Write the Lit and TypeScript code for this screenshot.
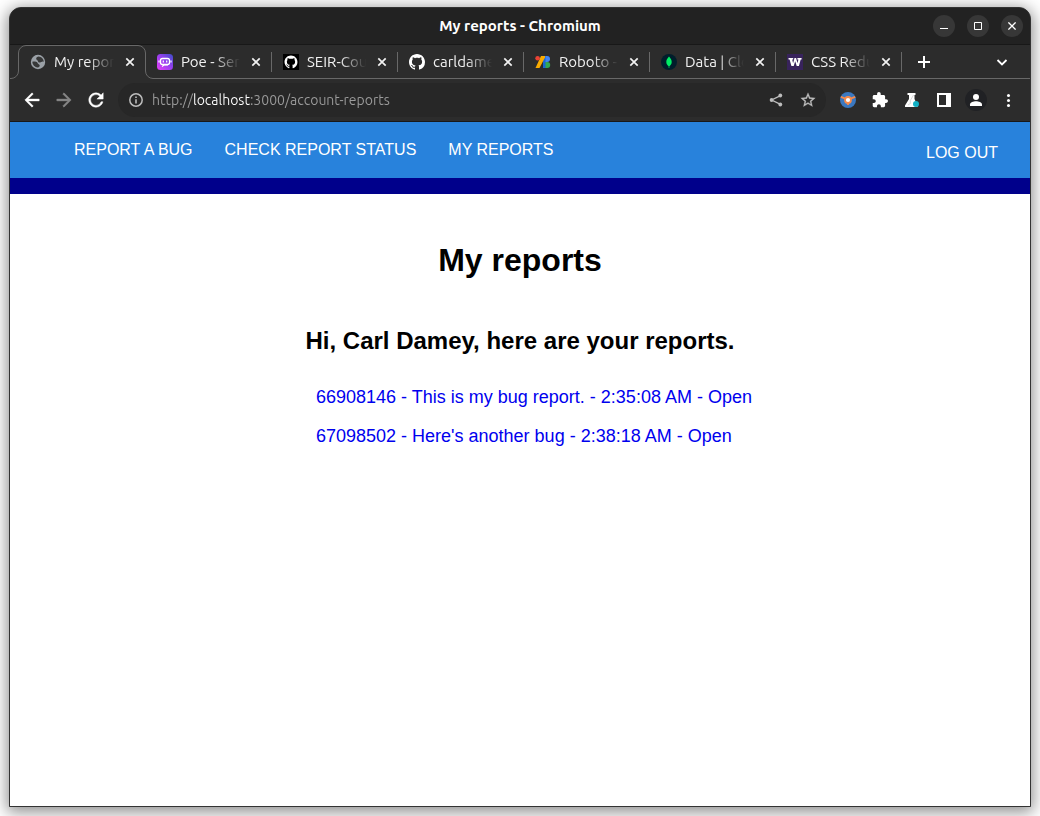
import { LitElement, html, css, svg, nothing, type TemplateResult } from "lit";
import { customElement, property } from "lit/decorators.js";
import { classMap } from "lit/directives/class-map.js";

const GITHUB =
  "M8 0C3.58 0 0 3.58 0 8c0 3.54 2.29 6.53 5.47 7.59.4.07.55-.17.55-.38 0-.19-.01-.82-.01-1.49-2.01.37-2.53-.49-2.69-.94-.09-.23-.48-.94-.82-1.13-.28-.15-.68-.52-.01-.53.63-.01 1.08.58 1.23.82.72 1.21 1.87.87 2.33.66.07-.52.28-.87.51-1.07-1.78-.2-3.64-.89-3.64-3.95 0-.87.31-1.59.82-2.15-.08-.2-.36-1.02.08-2.12 0 0 .67-.21 2.2.82.64-.18 1.32-.27 2-.27s1.36.09 2 .27c1.53-1.04 2.2-.82 2.2-.82.44 1.1.16 1.92.08 2.12.51.56.82 1.27.82 2.15 0 3.07-1.87 3.75-3.65 3.95.29.25.54.73.54 1.48 0 1.07-.01 1.93-.01 2.2 0 .21.15.46.55.38A8.01 8.01 0 0 0 16 8c0-4.42-3.58-8-8-8z";

const icon = (size: number, box: string, body: TemplateResult) => html`
  <svg width=${size} height=${size} viewBox=${box} fill="currentColor" aria-hidden="true">${body}</svg>
`;

const icons = {
  back: icon(18, "2 2 20 20", svg`<path d="M20 11H7.83l5.59-5.59L12 4l-8 8 8 8 1.41-1.41L7.83 13H20v-2z" stroke="currentColor" stroke-width=".5"/>`),
  forward: icon(18, "2 2 20 20", svg`<path d="M12 4l-1.41 1.41L16.17 11H4v2h12.17l-5.58 5.59L12 20l8-8z" stroke="currentColor" stroke-width=".5"/>`),
  reload: icon(18, "2 2 20 20", svg`<path d="M17.65 6.35A7.958 7.958 0 0012 4c-4.42 0-7.99 3.58-7.99 8s3.57 8 7.99 8c3.73 0 6.84-2.55 7.73-6h-2.08A5.99 5.99 0 0112 18c-3.31 0-6-2.69-6-6s2.69-6 6-6c1.66 0 3.14.69 4.22 1.78L13 11h7V4l-2.35 2.35z" stroke="currentColor" stroke-width=".5"/>`),
  info: icon(16, "0 0 16 16", svg`<circle cx="8" cy="8" r="6.2" fill="none" stroke="currentColor" stroke-width="1.5"/><path d="M7.2 7.2h1.6V11.4H7.2zM7.2 4.5h1.6v1.6H7.2z"/>`),
  share: icon(16, "0 0 16 16", svg`<path d="M12.5 3.6L3.6 8l8.9 4.4" fill="none" stroke="currentColor" stroke-width="1.3"/><circle cx="12.3" cy="3.5" r="1.9"/><circle cx="3.6" cy="8" r="1.9"/><circle cx="12.3" cy="12.5" r="1.9"/>`),
  star: icon(16, "1 1 22 22", svg`<path d="M22 9.24l-7.19-.62L12 2 9.19 8.63 2 9.24l5.46 4.73L5.82 21 12 17.27 18.18 21l-1.63-7.03L22 9.24zM12 15.4l-3.76 2.27 1-4.28-3.32-2.88 4.38-.38L12 6.1l1.71 4.04 4.38.38-3.32 2.88 1 4.28L12 15.4z" stroke="currentColor" stroke-width=".4"/>`),
  orb: icon(16, "0 0 16 16", svg`<circle cx="8" cy="8" r="8" fill="#3b78c0"/><path d="M.8 4.8l4.6 1.8M15.2 4.8l-4.6 1.8M8 10v3" stroke="#f58a4b" stroke-width="1.8"/><circle cx="8" cy="8" r="3" fill="#fff" stroke="#f58a4b" stroke-width="1.8"/>`),
  puzzle: icon(16, "1 1 22 22", svg`<path d="M20.5 11H19V7c0-1.100-.9-2-2-2h-4V3.500a2.500 2.500 0 0 0-5 0V5H4c-1.100 0-1.990.9-1.990 2v3.800H3.500c1.490 0 2.700 1.210 2.700 2.700s-1.210 2.700-2.700 2.700H2V20c0 1.100.9 2 2 2h3.800v-1.500c0-1.490 1.210-2.700 2.700-2.700s2.700 1.210 2.700 2.700V22H17c1.100 0 2-.9 2-2v-4h1.500a2.500 2.500 0 0 0 0-5z"/>`),
  flask: icon(16, "0 0 16 16", svg`<path d="M3.500 1h8v2h-1v4l3 6.500V15H1v-1.500L5 7V3H3.500z"/><path d="M9.500 3L6.300 8.500v3L4 13" fill="none" stroke="#bdbdbd" stroke-width=".6"/><circle cx="12" cy="12" r="3" fill="#12b0c4"/>`),
  panel: icon(14, "0 0 14 14", svg`<path fill-rule="evenodd" d="M0 0h14v14H0zM2 2v10h7V2z"/>`),
  person: icon(14, "0 0 14 14", svg`<circle cx="7" cy="4" r="3"/><path d="M1 13v-1.500C1 9.500 4.500 8.300 7 8.300s6 1.200 6 3.200V13z"/>`),
  menu: icon(16, "0 0 16 16", svg`<circle cx="8.500" cy="3.500" r="1.500"/><circle cx="8.500" cy="8.500" r="1.500"/><circle cx="8.500" cy="13.500" r="1.500"/>`),
  plus: icon(12, "0 0 12 12", svg`<path d="M5 0h2v5h5v2H7v5H5V7H0V5h5z"/>`),
  chevron: icon(12, "0 0 12 12", svg`<path d="M1.500 4L6 8.500 10.500 4" fill="none" stroke="currentColor" stroke-width="1.800"/>`),
  close: icon(10, "0 0 10 10", svg`<path d="M1.300 1.300l7.400 7.400M8.700 1.300L1.300 8.700" stroke="currentColor" stroke-width="1.700"/>`),
  minimize: icon(8, "0 0 8 8", svg`<path d="M0 6h8v1H0z"/>`),
  maximize: icon(8, "0 0 8 8", svg`<path fill="none" stroke="currentColor" d="M.5.5h7v7h-7z"/>`),
  quit: icon(8, "0 0 8 8", svg`<path d="M.4.400l7.200 7.200M7.600.400L.4 7.600" stroke="currentColor" stroke-width="1.300"/>`),
};

const favicons = {
  globe: icon(16, "0 0 16 16", svg`<circle cx="8" cy="8" r="7.200" fill="#9aa0a6"/><path d="M8.300 2.500C6.800 2.800 5.800 4 6.300 5.200c.4.900 1.700 1.100 1.700 2 0 .8.900 1.400 2 1.300 1.200-.1 1.600-1 2.900-.9l.9.100C13.600 5 11.500 2.600 8.300 2.500zM2.300 7.800c.2 3 2.500 5.500 5.400 5.700 1.300-.2 2.200-1.200 2-2.300-.3-.8-1.500-.8-1.800-1.600C7.500 8.300 6.200 7.500 4.800 7.600c-.9.100-1.700.1-2.500.2z" fill="#2c2c2c" opacity=".9"/>`),
  poe: icon(16, "0 0 16 16", svg`<defs><linearGradient id="poe" x1="0" y1="1" x2="1" y2="0"><stop offset="0" stop-color="#e83ef5"/><stop offset=".5" stop-color="#9b3ff0"/><stop offset="1" stop-color="#3b4cc8"/></linearGradient></defs><rect width="16" height="16" rx="3.500" fill="url(#poe)"/><rect x="3.500" y="4.500" width="9" height="6" rx="2" fill="none" stroke="#fff" stroke-width="1.300"/><path d="M2 6.500v2M14 6.500v2M6.300 6.500v2M9.700 6.500v2M5 12.500l2-1.500h4" fill="none" stroke="#fff" stroke-width="1.200"/>`),
  githubTile: icon(16, "0 0 16 16", svg`<path d="M0 0h16v16H0z" fill="#000"/><path d=${GITHUB} transform="translate(1.500 1.500) scale(.81)" fill="#fff"/>`),
  github: icon(16, "0 0 16 16", svg`<path d=${GITHUB} fill="#fff"/>`),
  fonts: icon(16, "0 0 16 16", svg`<path d="M8 2h3v12H8z" fill="#1967d2"/><path d="M6 2h4v1.500L4.500 14H.5z" fill="#f9ab00"/><circle cx="2.600" cy="4.300" r="2.300" fill="#ea4335"/><path d="M10.500 2h1.500a3 3 0 0 1 0 6h-1.500z" fill="#4285f4"/><path d="M10.500 8h1.700a3 3 0 0 1 0 6h-1.700z" fill="#34a853"/>`),
  mongo: icon(16, "0 0 16 16", svg`<circle cx="8" cy="8" r="8" fill="#001e2b"/><path d="M8 2.500c1.800 2 2.700 3.500 2.700 5.500S9.500 11.500 8.300 12.300V14h-.6v-1.700C6.500 11.500 5.300 10 5.300 8S6.200 4.500 8 2.500z" fill="#00ed64"/>`),
  uw: icon(16, "0 0 16 16", svg`<path d="M0 0h16v16H0z" fill="#38235c"/><path d="M1.500 4h4.700v1.400h-1l.9 3.800L7.500 4h1.600l1.400 5.200.9-3.800h-1V4h4.200v1.400h-.9L11.900 12H9.700L8.200 7.200 6.700 12H4.400L2.600 5.400H1.500z" fill="#fff"/>`),
};

type TabInfo = { title: string; favicon: keyof typeof favicons };

const tabs: TabInfo[] = [
  { title: "My repor", favicon: "globe" },
  { title: "Poe - Ser", favicon: "poe" },
  { title: "SEIR-Cou", favicon: "githubTile" },
  { title: "carldame", favicon: "github" },
  { title: "Roboto -", favicon: "fonts" },
  { title: "Data | Clo", favicon: "mongo" },
  { title: "CSS Redu", favicon: "uw" },
];

const buttonReset = css`
  button {
    display: grid;
    place-items: center;
    padding: 0;
    border: 0;
    background: none;
    color: inherit;
    font: inherit;
  }
  svg {
    display: block;
  }
`;

@customElement("browser-tab")
class BrowserTab extends LitElement {
  @property() title = "";
  @property() favicon: keyof typeof favicons = "globe";
  @property({ type: Boolean }) active = false;

  static styles = [
    buttonReset,
    css`
      :host {
        flex: 0 1 126px;
        min-width: 0;
        position: relative;
        color: #f1f1f1;
      }
      .tab {
        position: relative;
        display: flex;
        align-items: center;
        height: 34px;
        padding: 0 8px 0 11px;
      }
      .divided::after {
        content: "";
        position: absolute;
        right: 0;
        top: 7px;
        width: 1px;
        height: 20px;
        background: #686868;
      }
      .active {
        padding-left: 10px;
      }
      .outline {
        position: absolute;
        left: -10px;
        top: 0;
      }
      .select {
        flex: 1;
        min-width: 0;
        display: flex;
        align-items: center;
        gap: 8px;
      }
      .select svg {
        flex: none;
      }
      .name {
        flex: 1;
        overflow: hidden;
        white-space: nowrap;
        text-align: left;
        line-height: 20px;
        mask-image: linear-gradient(to right, #000 calc(100% - 26px), transparent);
      }
      .close {
        width: 16px;
        height: 16px;
        margin-left: 8px;
      }
    `,
  ];

  render() {
    return html`
      ${this.active
        ? html`<svg class="outline" width="144" height="34" viewBox="0 0 144 34" fill="#2c2c2c" stroke="#686868" aria-hidden="true">
            <path d="M0 33h144v1H0z" stroke="none" />
            <path d="M0 33.500H1A7.500 7.500 0 0 0 8.500 26V8A7.500 7.500 0 0 1 16 .5H128A7.500 7.500 0 0 1 135.500 8V26A7.500 7.500 0 0 0 143 33.500H144" />
          </svg>`
        : nothing}
      <div class=${classMap({ tab: true, active: this.active, divided: !this.active })}>
        <button class="select">${favicons[this.favicon]}<span class="name">${this.title}</span></button>
        <button class="close" aria-label="Close tab">${icons.close}</button>
      </div>
    `;
  }
}

@customElement("reports-page")
class ReportsPage extends LitElement {
  static styles = css`
    :host {
      display: block;
      background: #fff;
      color: #000;
      font: 16px/18px "Liberation Sans", Arial, sans-serif;
    }
    .nav {
      display: flex;
      justify-content: space-between;
      align-items: center;
      height: 56px;
      padding: 0 32px 0 64px;
      background: #2882dc;
      border-bottom: 16px solid #00008b;
    }
    .links {
      display: flex;
      gap: 32px;
    }
    .nav a {
      color: #fff;
      text-decoration: none;
    }
    .account {
      padding-top: 6px;
    }
    main {
      padding: 48px 16px;
      text-align: center;
    }
    h1 {
      margin: 0;
      font-size: 32px;
      line-height: 36px;
    }
    h2 {
      margin: 49px 0 32px;
      font-size: 24px;
      line-height: 28px;
    }
    .reports {
      display: grid;
      gap: 19px;
      width: fit-content;
      margin: 0 auto;
      padding: 0 12px 0 40px;
      list-style: none;
      text-align: left;
      font-size: 18px;
      line-height: 20px;
    }
    .reports a {
      color: #0000ee;
      text-decoration: none;
    }
  `;

  reports = [
    { id: "66908146", title: "This is my bug report.", time: "2:35:08 AM", status: "Open" },
    { id: "67098502", title: "Here's another bug", time: "2:38:18 AM", status: "Open" },
  ];

  render() {
    return html`
      <nav class="nav">
        <div class="links">
          <a href="#report">REPORT A BUG</a>
          <a href="#status">CHECK REPORT STATUS</a>
          <a href="#reports">MY REPORTS</a>
        </div>
        <a class="account" href="#logout">LOG OUT</a>
      </nav>
      <main>
        <h1>My reports</h1>
        <h2>Hi, Carl Damey, here are your reports.</h2>
        <ul class="reports">
          ${this.reports.map(
            (r) => html`<li><a href="#${r.id}">${r.id} - ${r.title} - ${r.time} - ${r.status}</a></li>`
          )}
        </ul>
      </main>
    `;
  }
}

@customElement("app-root")
class AppRoot extends LitElement {
  static styles = [
    buttonReset,
    css`
      :host {
        box-sizing: border-box;
        display: flex;
        min-height: 100vh;
        padding: 7px 9px 9px;
        background: #fff;
        font: 15px/20px Ubuntu, "Noto Sans", sans-serif;
      }
      .window {
        flex: 1;
        min-width: 0;
        display: flex;
        flex-direction: column;
        overflow: hidden;
        border: 1px solid #333;
        border-radius: 12px 12px 0 0;
        background: #2c2c2c;
        box-shadow: 0 3px 16px 2px rgba(0, 0, 0, 0.45);
        color: #fff;
      }
      .titlebar {
        display: grid;
        grid-template-columns: 1fr auto 1fr;
        align-items: center;
        height: 36px;
        padding: 0 7px;
        background: #222;
        border-bottom: 1px solid #181818;
      }
      .caption {
        grid-column: 2;
        font-weight: 700;
      }
      .controls {
        display: flex;
        justify-content: flex-end;
        gap: 12px;
      }
      .controls button {
        width: 22px;
        height: 22px;
        border-radius: 11px;
        background: #373737;
      }
      .strip {
        display: flex;
        height: 34px;
        padding-left: 10px;
        background: linear-gradient(#686868, #686868) bottom / 100% 1px no-repeat;
      }
      .strip button {
        width: 44px;
        height: 34px;
      }
      .strip .search {
        width: 56px;
        margin-left: auto;
      }
      .toolbar {
        display: flex;
        align-items: center;
        gap: 6px;
        height: 42px;
        padding: 0 6px;
        border-bottom: 1px solid #181818;
        font-size: 14px;
      }
      .group {
        display: flex;
      }
      .toolbar button {
        width: 32px;
        height: 32px;
        flex: none;
      }
      .toolbar .dim {
        color: #868686;
      }
      .address {
        flex: 1;
        min-width: 0;
        display: flex;
        align-items: center;
        height: 34px;
        padding: 0 2px;
        border-radius: 17px;
        background: #272727;
        color: #bdbdbd;
      }
      .address input {
        flex: 1;
        min-width: 0;
        padding: 0;
        border: 0;
        outline: 0;
        font: inherit;
        background: linear-gradient(to right, #9c9c9c 41px, #fff 41px, #fff 99px, #9c9c9c 99px);
        background-clip: text;
        color: transparent;
      }
      .toolbar .avatar span {
        display: grid;
        place-items: center;
        width: 22px;
        height: 22px;
        border-radius: 11px;
        background: #202124;
      }
      .page {
        flex: 1;
      }
    `,
  ];

  render() {
    return html`
      <div class="window">
        <header class="titlebar">
          <span class="caption">My reports - Chromium</span>
          <div class="controls">
            <button aria-label="Minimize">${icons.minimize}</button>
            <button aria-label="Maximize">${icons.maximize}</button>
            <button aria-label="Close">${icons.quit}</button>
          </div>
        </header>
        <div class="strip">
          ${tabs.map((t, i) => html`<browser-tab .title=${t.title} .favicon=${t.favicon} ?active=${i === 0}></browser-tab>`)}
          <button aria-label="New tab">${icons.plus}</button>
          <button class="search" aria-label="Search tabs">${icons.chevron}</button>
        </div>
        <div class="toolbar">
          <div class="group">
            <button aria-label="Back">${icons.back}</button>
            <button class="dim" aria-label="Forward">${icons.forward}</button>
            <button aria-label="Reload">${icons.reload}</button>
          </div>
          <div class="address">
            <button aria-label="Site information">${icons.info}</button>
            <input type="text" aria-label="Address" value="http://localhost:3000/account-reports" />
            <button aria-label="Share">${icons.share}</button>
            <button aria-label="Bookmark">${icons.star}</button>
          </div>
          <div class="group">
            <button aria-label="Color extension">${icons.orb}</button>
            <button aria-label="Extensions">${icons.puzzle}</button>
            <button aria-label="Experiments">${icons.flask}</button>
            <button aria-label="Side panel">${icons.panel}</button>
            <button class="avatar" aria-label="Profile"><span>${icons.person}</span></button>
            <button aria-label="Menu">${icons.menu}</button>
          </div>
        </div>
        <reports-page class="page"></reports-page>
      </div>
    `;
  }
}
